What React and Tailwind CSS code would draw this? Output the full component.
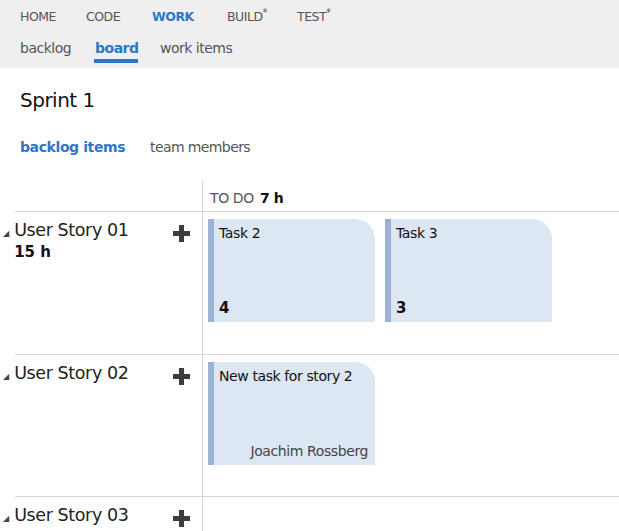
import React from 'react';

const font = { fontFamily: '"DejaVu Sans", Verdana, sans-serif' };

const Plus = () => (
  <svg width="17" height="17" viewBox="0 0 17 17" className="shrink-0">
    <path d="M6 0h5v6h6v5h-6v6H6v-6H0V6h6z" fill="#3c3c3c" />
  </svg>
);

const Card = ({ title, remaining, owner }) => (
  <div className="w-[167px] h-[103px] bg-[#dde6f3] border-l-[6px] border-[#9bb2d4] rounded-tr-[20px] flex flex-col justify-between pl-[5px] pr-[7px] pt-[4px] pb-[3px]">
    <div className="text-[14px] text-[#111] tracking-[-0.4px]">{title}</div>
    {remaining && <div className="text-[15px] font-bold text-[#111]">{remaining}</div>}
    {owner && <div className="text-[14px] text-[#444] text-right tracking-[-0.4px]">{owner}</div>}
  </div>
);

const StoryRow = ({ name, hours, cards, height }) => (
  <div className={`flex ml-[15px] border-t border-[#d6d6d6] ${height}`}>
    <div className="w-[187px] shrink-0 flex justify-between pr-[12px] pt-[7px]">
      <div className="flex items-start -ml-[12px]">
        <span className="text-[8px] text-[#444] mt-[11px] mr-[5px] leading-none">◢</span>
        <div>
          <div className="text-[17.5px] text-[#222] leading-[22px] tracking-[-0.4px]">{name}</div>
          {hours && <div className="text-[15px] font-bold text-[#111] leading-[20px] pt-[1px]">{hours}</div>}
        </div>
      </div>
      <div className="pt-[6px]"><Plus /></div>
    </div>
    <div className="flex-1 border-l border-[#d6d6d6] pl-[5px] pt-[7px] flex gap-[10px]">
      {cards.map((c, i) => <Card key={i} {...c} />)}
    </div>
  </div>
);

export default function App() {
  return (
    <div className="w-[619px] h-[531px] bg-white overflow-hidden" style={font}>
      <div className="bg-[#efefef] h-[68px] px-[20px]">
        <div className="flex items-center h-[32px] pt-[2px] text-[12.5px] text-[#555] tracking-[-0.5px]">
          <span className="w-[66px]">HOME</span>
          <span className="w-[66px]">CODE</span>
          <span className="w-[75px] font-bold text-[#2f76c6]">WORK</span>
          <span className="w-[70px]">BUILD<sup className="text-[10px]">*</sup></span>
          <span>TEST<sup className="text-[10px]">*</sup></span>
        </div>
        <div className="flex h-[36px] text-[14px] text-[#555] tracking-[-0.5px]">
          <span className="w-[75px] pt-[6px]">backlog</span>
          <span className="w-[65px] flex flex-col">
            <span className="pt-[6px] font-bold text-[#2f76c6] w-[44px] h-[31px] border-b-[4px] border-[#2f76c6] -ml-[1px] pl-[1px]">board</span>
          </span>
          <span className="pt-[6px]">work items</span>
        </div>
      </div>

      <div className="px-[20px] pt-[19px] text-[20px] text-[#111] tracking-[-0.5px] leading-[26px]">Sprint 1</div>

      <div className="flex px-[20px] pt-[25px] text-[14px] tracking-[-0.4px] leading-[18px]">
        <span className="w-[130px] font-bold text-[#2f76c6]">backlog items</span>
        <span className="text-[#555] tracking-[-0.6px]">team members</span>
      </div>

      <div className="flex ml-[15px] mt-[25px] h-[30px]">
        <div className="w-[187px] shrink-0" />
        <div className="flex-1 border-l border-[#d6d6d6] pl-[7px] pt-[8px] text-[14px] tracking-[-0.4px] leading-[18px]">
          <span className="text-[#555]">TO DO </span>
          <span className="font-bold text-[#111] ml-[2px]">7 h</span>
        </div>
      </div>

      <StoryRow
        name="User Story 01"
        hours="15 h"
        height="h-[143px]"
        cards={[{ title: 'Task 2', remaining: '4' }, { title: 'Task 3', remaining: '3' }]}
      />
      <StoryRow
        name="User Story 02"
        height="h-[142px]"
        cards={[{ title: 'New task for story 2', owner: 'Joachim Rossberg' }]}
      />
      <StoryRow name="User Story 03" height="h-[60px]" cards={[]} />
    </div>
  );
}
